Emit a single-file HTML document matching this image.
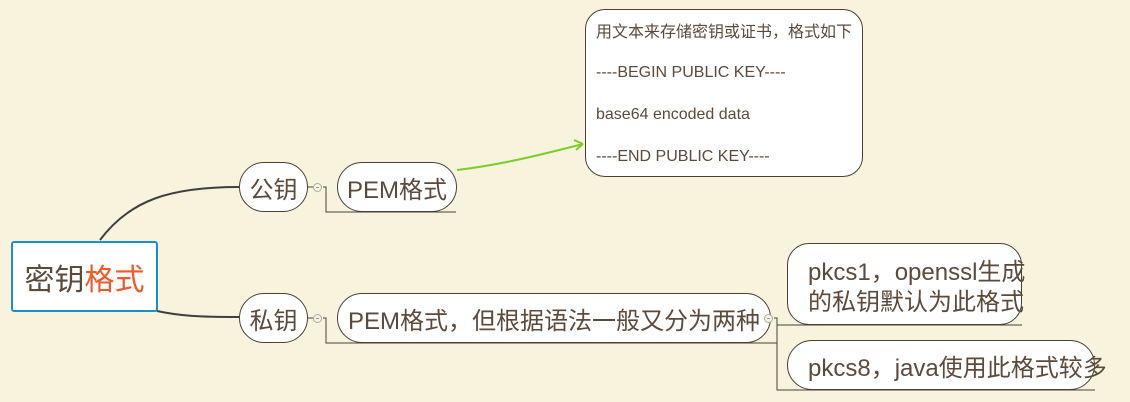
<!DOCTYPE html>
<html><head><meta charset="utf-8"><style>
body{margin:0;width:1130px;height:402px;background:#f8f3dc;position:relative;overflow:hidden;font-family:"Liberation Sans","Noto Sans CJK SC",sans-serif;color:#5c4a3a}
.n{position:absolute;box-sizing:border-box;background:#fff;border:1px solid #4a4038;border-radius:25px;font-size:24px;display:flex;align-items:center;justify-content:center;white-space:nowrap}
.c{position:absolute;width:9px;height:9px;border:1px solid #aaa;border-radius:50%;background:#f8f3dc;box-sizing:border-box}
.c:after{content:"";position:absolute;left:2px;right:2px;top:3px;height:1px;background:#999}
.t{position:absolute;font-size:16px;white-space:nowrap}
</style></head><body>
<svg width="1130" height="402" style="position:absolute;left:0;top:0">
<g fill="none" stroke="#3f3f3f" stroke-width="2">
<path d="M100 240 C130 200 170 187 239 187"/>
<path d="M157 311 C180 316 200 317 239 317"/>
</g>
<g fill="none" stroke="#4a4038" stroke-width="1">
<path d="M307 187 H313 M323 187 H326 V212 H456"/>
<path d="M307 318 H313 M323 318 H326 V343 H777"/>
<path d="M774 318 H777 V390 H1095 M777 325 H1022"/>
</g>
<path d="M457 170 C500 165 540 155 583 144" fill="none" stroke="#7ccc2c" stroke-width="2"/>
<path d="M583 144 l-9 -4 M583 144 l-7 6" fill="none" stroke="#7ccc2c" stroke-width="2"/>
</svg>
<div style="position:absolute;left:11px;top:241px;width:147px;height:71px;box-sizing:border-box;border:2px solid #1a8fd0;border-radius:3px;background:#fff;font-size:30px;display:flex;align-items:center;justify-content:center">密钥<span style="color:#f05a28">格式</span></div>
<div class="n" style="left:239px;top:162px;width:69px;height:50px">公钥</div>
<div class="c" style="left:313px;top:183px"></div>
<div class="n" style="left:337px;top:162px;width:120px;height:50px">PEM格式</div>
<div class="n" style="left:239px;top:293px;width:69px;height:50px">私钥</div>
<div class="c" style="left:313px;top:314px"></div>
<div class="n" style="left:337px;top:293px;width:434px;height:50px">PEM格式，但根据语法一般又分为两种</div>
<div class="c" style="left:764px;top:314px"></div>
<div class="n" style="left:787px;top:243px;width:235px;height:82px;border-radius:22px;display:block;padding:14px 0 0 20px;line-height:30px">pkcs1，openssl生成<br>的私钥默认为此格式</div>
<div class="n" style="left:787px;top:340px;width:308px;height:50px;justify-content:flex-start;padding-left:20px">pkcs8，java使用此格式较多</div>
<div class="n" style="left:585px;top:9px;width:278px;height:168px;border-radius:20px"></div>
<div class="t" style="left:596px;top:18px">用文本来存储密钥或证书，格式如下</div>
<div class="t" style="left:596px;top:64px">----BEGIN PUBLIC KEY----</div>
<div class="t" style="left:596px;top:106px">base64 encoded data</div>
<div class="t" style="left:596px;top:148px">----END PUBLIC KEY----</div>
</body></html>
